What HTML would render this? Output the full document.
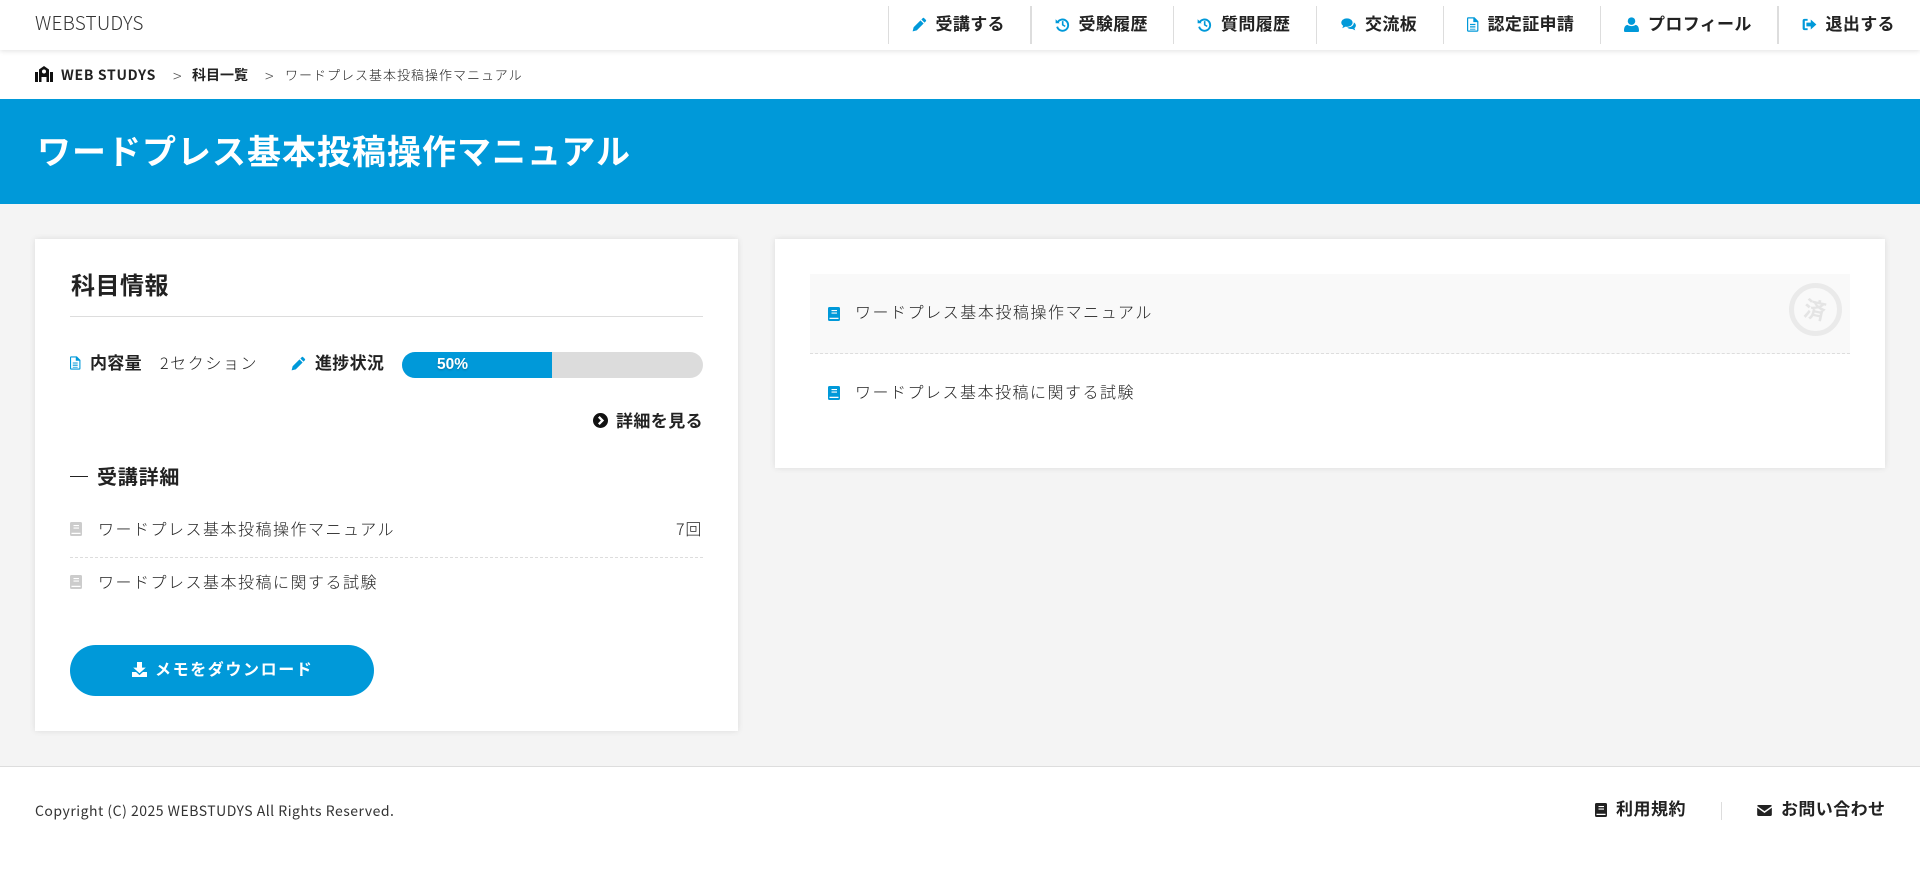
<!DOCTYPE html>
<html lang="ja">
<head>
<meta charset="utf-8">
<title>ワードプレス基本投稿操作マニュアル</title>
<style>
html,body{margin:0;padding:0;background:#f4f4f4;}
body{width:1920px;height:892px;position:relative;overflow:hidden;font-family:"Noto Sans CJK JP","Liberation Sans",sans-serif;color:#222;}
.t{position:absolute;white-space:nowrap;line-height:24px;height:24px;}
.b{font-weight:700;}
.m{font-weight:500;}
.a{position:absolute;}
svg{position:absolute;display:block;}
.sep{position:absolute;top:6px;height:38px;width:1px;background:#ddd;}
.nav{font-size:17px;font-weight:700;letter-spacing:.35px;color:#222;top:11px;}
.list{font-size:16px;font-weight:300;letter-spacing:1.5px;color:#222;}
</style>
</head>
<body>
<svg width="0" height="0" style="position:absolute">
<defs>
<symbol id="pencil" viewBox="0 0 24 24"><path d="M17.2 1.8a1.6 1.6 0 0 1 2.2 0l2.8 2.8a1.6 1.6 0 0 1 0 2.2L20 9 15 4zM13.6 5.4l5 5L7.6 21.4 1 23l1.6-6.6z"/></symbol>
<symbol id="history" viewBox="0 0 24 24"><path d="M1 3.5l6.5 6.5H1z"/><path d="M4 9a9 9 0 1 1-.6 6.5" fill="none" stroke="currentColor" stroke-width="3"/><path d="M11 6.5h2.6v5.4l3.4 2-1.3 2.1-4.7-2.8z"/></symbol>
<symbol id="comments" viewBox="0 0 24 24"><ellipse cx="9.5" cy="9" rx="9" ry="6.8"/><path d="M4 13l-2 5 6-3z"/><path d="M20.5 8.6c2 1.2 3.3 3 3.3 5 0 1.700-.9 3.200-2.300 4.300l1.300 3.500-4.600-2.300c-3.200.6-6.600-.4-8.200-2.500 5.800.3 11-3 10.500-8z"/></symbol>
<symbol id="file" viewBox="0 0 20 24"><path fill-rule="evenodd" d="M2 0h10.500L19 6.500V22a2 2 0 0 1-2 2H2a2 2 0 0 1-2-2V2a2 2 0 0 1 2-2zM2 2v20h15V8h-6.500V2z"/><path d="M5 11h9v2H5zM5 15h9v2H5zM5 19h9v1.500H5z"/></symbol>
<symbol id="user" viewBox="0 0 24 24"><circle cx="12" cy="6.500" r="6"/><path d="M2 24a2 2 0 0 1-2-2c0-5 1.500-9 5.500-9.500 1.500 1.300 4 2 6.500 2s5-.7 6.500-2c4 .5 5.500 4.500 5.500 9.500a2 2 0 0 1-2 2z"/></symbol>
<symbol id="out" viewBox="0 0 24 24"><path d="M9 3H4a3 3 0 0 0-3 3v12a3 3 0 0 0 3 3h5v-3H4.500V6H9z"/><path d="M7 9h7V4l9 8-9 8v-5H7z"/></symbol>
<symbol id="book" viewBox="0 0 24 28"><path fill-rule="evenodd" d="M3 0h18a3 3 0 0 1 3 3v22a3 3 0 0 1-3 3H3a3 3 0 0 1-3-3V3a3 3 0 0 1 3-3zM7 6v2.200h11V6zM7 11v2.200h11V11zM3 21.500V24h18v-2.500z"/></symbol>
<symbol id="mail" viewBox="0 0 24 18"><path d="M2 0h20a2 2 0 0 1 2 1.600L12 10 0 1.600A2 2 0 0 1 2 0z"/><path d="M0 4.500L12 13 24 4.500V16a2 2 0 0 1-2 2H2a2 2 0 0 1-2-2z"/></symbol>
<symbol id="dl" viewBox="0 0 24 24"><path d="M8 0h8v9h6L12 18 2 9h6z"/><path d="M0 16h6.500l5.500 5 5.500-5H24v8H0z"/></symbol>
</defs>
</svg>

<!-- header -->
<div class="a" style="left:0;top:0;width:1920px;height:50px;background:#fff;box-shadow:0 1px 5px rgba(0,0,0,.12);z-index:2"></div>
<div style="position:absolute;left:0;top:0;width:1920px;height:60px;z-index:3">
  <div class="t" style="left:35px;top:11px;font-size:19px;font-weight:300;color:#333;letter-spacing:.2px">WEBSTUDYS</div>
  <div class="sep" style="left:888px"></div>
  <svg style="left:912px;top:17px;color:#0099d9;fill:#0099d9" width="15" height="15"><use href="#pencil"/></svg>
  <div class="t nav" style="left:935.5px">受講する</div>
  <div class="sep" style="left:1030px;width:2px"></div>
  <svg style="left:1055px;top:17px;color:#0099d9;fill:#0099d9" width="15" height="15"><use href="#history"/></svg>
  <div class="t nav" style="left:1078.5px">受験履歴</div>
  <div class="sep" style="left:1173px"></div>
  <svg style="left:1197px;top:17px;color:#0099d9;fill:#0099d9" width="15" height="15"><use href="#history"/></svg>
  <div class="t nav" style="left:1221px">質問履歴</div>
  <div class="sep" style="left:1316px"></div>
  <svg style="left:1340px;top:17px;color:#0099d9;fill:#0099d9" width="17" height="15"><use href="#comments"/></svg>
  <div class="t nav" style="left:1365px">交流板</div>
  <div class="sep" style="left:1443px"></div>
  <svg style="left:1467px;top:17px;fill:#0099d9" width="12" height="15"><use href="#file"/></svg>
  <div class="t nav" style="left:1487.5px">認定証申請</div>
  <div class="sep" style="left:1600px"></div>
  <svg style="left:1624px;top:17px;fill:#0099d9" width="15" height="15"><use href="#user"/></svg>
  <div class="t nav" style="left:1648px">プロフィール</div>
  <div class="sep" style="left:1777px;width:2px"></div>
  <svg style="left:1802px;top:17px;fill:#0099d9" width="15" height="15"><use href="#out"/></svg>
  <div class="t nav" style="left:1825.5px">退出する</div>
</div>

<!-- breadcrumb -->
<div class="a" style="left:0;top:50px;width:1920px;height:49px;background:#fff"></div>
<svg style="left:35px;top:66px" width="18" height="16" viewBox="0 0 18 16"><path fill="#111" d="M0 6h3v10H0zM15 6h3v10h-3z"/><path fill-rule="evenodd" fill="#111" d="M9 0l5 3.500V16h-2.500v-5h-5v5H4V3.500zM9 3.500a2 2 0 1 0 0 4 2 2 0 0 0 0-4z"/></svg>
<div class="t b" style="left:61px;top:63px;font-size:14px;letter-spacing:.7px;color:#222">WEB STUDYS</div>
<div class="t" style="left:173px;top:63px;font-size:16px;color:#555;font-weight:300">&gt;</div>
<div class="t b" style="left:192px;top:63px;font-size:14px;color:#222">科目一覧</div>
<div class="t" style="left:265px;top:63px;font-size:16px;color:#555;font-weight:300">&gt;</div>
<div class="t" style="left:285px;top:63px;font-size:13px;font-weight:300;letter-spacing:1px;color:#222">ワードプレス基本投稿操作マニュアル</div>

<!-- title band -->
<div class="a" style="left:0;top:99px;width:1920px;height:105px;background:#0099d9"></div>
<div class="t b" style="left:37px;top:126px;font-size:34px;line-height:48px;height:48px;letter-spacing:1px;color:#fff">ワードプレス基本投稿操作マニュアル</div>

<!-- left card -->
<div class="a" style="left:35px;top:239px;width:703px;height:492px;background:#fff;box-shadow:0 0 6px rgba(0,0,0,.1)"></div>
<div class="t b" style="left:71px;top:272px;font-size:24px;letter-spacing:.5px;color:#222">科目情報</div>
<div class="a" style="left:70px;top:316px;width:633px;height:1px;background:#ddd"></div>

<svg style="left:70px;top:356px;fill:#0099d9" width="11" height="14"><use href="#file"/></svg>
<div class="t b" style="left:90px;top:350px;font-size:17px;letter-spacing:.3px;color:#222">内容量</div>
<div class="t" style="left:160px;top:350px;font-size:16px;font-weight:300;letter-spacing:1.6px;color:#222">2セクション</div>
<svg style="left:291px;top:356px;fill:#0099d9" width="15" height="15"><use href="#pencil"/></svg>
<div class="t b" style="left:315px;top:350px;font-size:17px;letter-spacing:.3px;color:#222">進捗状況</div>
<div class="a" style="left:402px;top:352px;width:301px;height:26px;border-radius:13px;background:#dcdcdc;overflow:hidden">
  <div style="width:150px;height:26px;background:#0099d9"></div>
</div>
<div class="t b" style="left:437px;top:353px;font-family:'Liberation Sans',sans-serif;font-size:15.500px;color:#fff;text-shadow:0 1px 2px rgba(0,0,0,.25)">50%</div>

<svg style="left:593px;top:413px" width="15" height="15" viewBox="0 0 15 15"><circle cx="7.500" cy="7.500" r="7.500" fill="#111"/><path d="M5.800 3.800l3.700 3.700-3.700 3.700" fill="none" stroke="#fff" stroke-width="2.300"/></svg>
<div class="t b" style="left:616px;top:408px;font-size:17px;color:#222;letter-spacing:.4px">詳細を見る</div>

<div class="a" style="left:70px;top:476px;width:18px;height:1px;background:#222"></div>
<div class="t b" style="left:97px;top:464px;font-size:20px;color:#222;letter-spacing:.8px">受講詳細</div>

<svg style="left:70px;top:522px;fill:#ccc" width="12" height="14"><use href="#book"/></svg>
<div class="t list" style="left:98px;top:516px">ワードプレス基本投稿操作マニュアル</div>
<div class="t" style="left:676px;top:516px;font-size:16px;font-weight:300;color:#222;letter-spacing:.8px">7回</div>
<div class="a" style="left:70px;top:557px;width:633px;border-top:1px dashed #ddd"></div>
<svg style="left:70px;top:575px;fill:#ccc" width="12" height="14"><use href="#book"/></svg>
<div class="t list" style="left:98px;top:569px">ワードプレス基本投稿に関する試験</div>

<div class="a" style="left:70px;top:645px;width:304px;height:51px;border-radius:26px;background:#0099d9"></div>
<svg style="left:132px;top:662px;fill:#fff" width="15" height="15"><use href="#dl"/></svg>
<div class="t b" style="left:155px;top:656px;font-size:16px;letter-spacing:1.600px;color:#fff">メモをダウンロード</div>

<!-- right card -->
<div class="a" style="left:775px;top:239px;width:1110px;height:229px;background:#fff;box-shadow:0 0 6px rgba(0,0,0,.1)"></div>
<div class="a" style="left:810px;top:274px;width:1040px;height:79px;background:#f9f9f9;border-bottom:1px dashed #ddd"></div>
<svg style="left:828px;top:307px;fill:#0099d9" width="12" height="14"><use href="#book"/></svg>
<div class="t list" style="left:855px;top:299px;letter-spacing:1.55px">ワードプレス基本投稿操作マニュアル</div>
<div class="a" style="left:1789px;top:283px;width:43px;height:43px;border:5px solid #eaeaea;border-radius:50%"></div>
<div class="t b" style="left:1804px;top:297px;font-size:22px;color:#e4e4e4;transform:rotate(12deg)">済</div>
<svg style="left:828px;top:386px;fill:#0099d9" width="12" height="14"><use href="#book"/></svg>
<div class="t list" style="left:855px;top:379px;letter-spacing:1.5px">ワードプレス基本投稿に関する試験</div>

<!-- footer -->
<div class="a" style="left:0;top:766px;width:1920px;height:126px;background:#fff;border-top:1px solid #ddd;box-sizing:border-box"></div>
<div class="t" style="left:35px;top:799px;font-size:14px;font-weight:400;color:#333;letter-spacing:.5px">Copyright (C) 2025 WEBSTUDYS All Rights Reserved.</div>
<svg style="left:1595px;top:803px;fill:#222" width="12" height="14"><use href="#book"/></svg>
<div class="t b" style="left:1616px;top:796px;font-size:17px;letter-spacing:.5px;color:#222">利用規約</div>
<div class="a" style="left:1721px;top:802px;width:1px;height:18px;background:#ddd"></div>
<svg style="left:1757px;top:805px;fill:#222" width="15" height="11"><use href="#mail"/></svg>
<div class="t b" style="left:1781px;top:796px;font-size:17px;color:#222;letter-spacing:.4px">お問い合わせ</div>
</body>
</html>
